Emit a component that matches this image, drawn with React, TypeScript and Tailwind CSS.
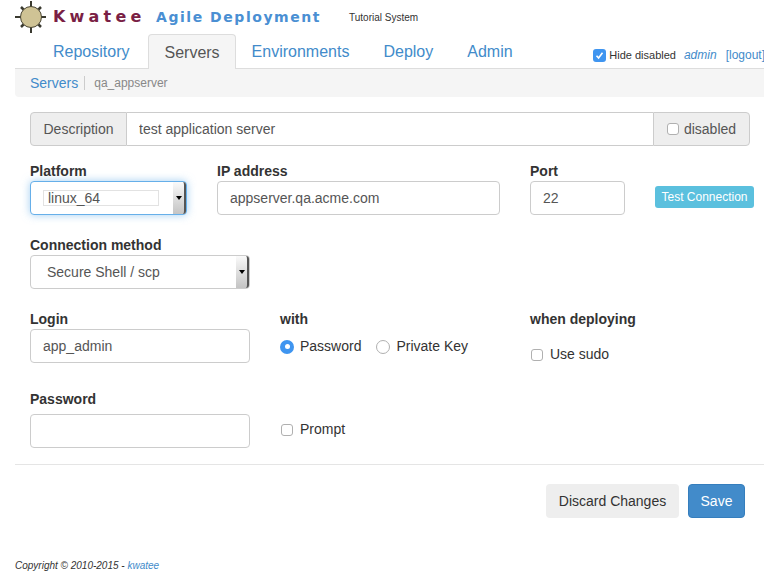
import React from "react";

const tabs = ["Repository", "Servers", "Environments", "Deploy", "Admin"];

// Logo
function SunLogo() {
  return (
    <svg width="32" height="34" viewBox="0 0 32 34" className="shrink-0">
      <g stroke="#3a3a30" strokeWidth="2">
        <path d="M16 1V33" />
        <path d="M0 17H31" />
        <path d="M6 7L10 11M26 7L22 11M6 27L10 23M26 27L22 23" strokeWidth="2.5" />
      </g>
      <circle cx="16" cy="17" r="10.5" fill="#cfc395" stroke="#4a4634" strokeWidth="1" />
    </svg>
  );
}

function Check({ on }: { on?: boolean }) {
  if (on) {
    return (
      <span className="w-[13px] h-[13px] rounded-[3px] bg-[#3f95f0] flex items-center justify-center shrink-0">
        <svg width="9" height="9" viewBox="0 0 9 9">
          <path d="M1.5 4.7L3.6 7L7.5 1.8" fill="none" stroke="#fff" strokeWidth="1.6" />
        </svg>
      </span>
    );
  }
  return <span className="w-[12px] h-[12px] rounded-[3px] bg-white border border-[#b0b0b0] shrink-0" />;
}

function Radio({ on }: { on?: boolean }) {
  if (on) {
    return (
      <span className="w-[14px] h-[14px] rounded-full bg-[#3f95f0] flex items-center justify-center shrink-0">
        <span className="w-[5px] h-[5px] rounded-full bg-white" />
      </span>
    );
  }
  return <span className="w-[14px] h-[14px] rounded-full bg-white border border-[#b0b0b0] shrink-0" />;
}

function Label({ children }: { children: React.ReactNode }) {
  return <div className="text-[14px] leading-[20px] font-bold text-[#333]">{children}</div>;
}

function TextBox({ value, className }: { value: string; className: string }) {
  return (
    <input
      readOnly
      value={value}
      className={`h-[34px] px-3 text-[14px] text-[#555] bg-white border border-[#ccc] rounded-[4px] outline-none ${className}`}
    />
  );
}

function SelectArrow() {
  return (
    <div className="w-[13px] self-stretch bg-gradient-to-b from-[#fafafa] to-[#c4c4c4] border-r-2 border-[#555] rounded-r-[3px] flex items-center justify-center">
      <span className="w-0 h-0 border-x-[3px] border-x-transparent border-t-[4px] border-t-black" />
    </div>
  );
}

export default function App() {
  return (
    <div className="w-[764px] h-[571px] overflow-hidden bg-white font-['Liberation_Sans',Arial,sans-serif] text-[#333] text-[14px]">
      {/* Header */}
      <div className="h-[34px] pl-[15px] flex items-center">
        <SunLogo />
        <span className="ml-[6px] w-[103px] font-['DejaVu_Sans',sans-serif] font-bold text-[16px] tracking-[4.2px] text-[#7a1f45]">Kwatee</span>
        <span className="w-[193px] font-['DejaVu_Sans',sans-serif] text-[14px] font-semibold tracking-[1.55px] text-[#4a8fd3]">Agile Deployment</span>
        <span className="text-[10px] text-[#333]">Tutorial System</span>
      </div>

      {/* Tabs */}
      <div className="h-[35px] ml-[15px] pl-[22px] flex items-end border-b border-[#ddd]">
        {tabs.map((t) =>
          t === "Servers" ? (
            <div key={t} className="h-[35px] -mb-px px-[15px] pt-[2px] flex items-center text-[16px] text-[#555] bg-[#f5f5f5] border border-b-0 border-[#ddd] rounded-t-[4px]">
              {t}
            </div>
          ) : (
            <div key={t} className={`h-[35px] px-[16px] pt-[2px] flex items-center text-[16px] text-[#428bca] ${t === "Repository" ? "mr-[3px]" : "mr-[2px]"}`}>{t}</div>
          )
        )}
        <div className="ml-auto -mr-px h-[35px] flex items-center text-[11px] pt-[9px]">
          <Check on />
          <span className="ml-[3px] text-[#333]">Hide disabled</span>
          <span className="ml-[8px] italic text-[12px] text-[#428bca]">admin</span>
          <span className="ml-[9px] text-[12px] text-[#428bca]">[logout]</span>
        </div>
      </div>

      {/* Breadcrumb */}
      <div className="h-[28px] ml-[15px] pl-[15px] flex items-center bg-[#f5f5f5] rounded-bl-[4px]">
        <span className="text-[#428bca]">Servers</span>
        <span className="ml-[6px] h-[14px] border-l border-[#ccc]" />
        <span className="ml-[9px] text-[12px] text-[#888]">qa_appserver</span>
      </div>

      {/* Form */}
      <div className="px-[30px] pt-[15px] w-[750px] box-content">
        <div className="flex h-[34px] w-[720px]">
          <div className="w-[97px] flex items-center justify-center bg-[#eee] border border-[#ccc] rounded-l-[4px] text-[#555]">Description</div>
          <input readOnly value="test application server" className="flex-1 min-w-0 px-3 text-[14px] text-[#555] border-y border-[#ccc] outline-none" />
          <div className="w-[97px] flex items-center justify-center gap-[5px] bg-[#eee] border border-[#ccc] rounded-r-[4px] text-[#555]">
            <Check />
            disabled
          </div>
        </div>

        <div className="mt-[15px] flex">
          <div className="w-[187px]">
            <Label>Platform</Label>
            <div className="w-[157px] h-[34px] flex items-center pl-[12px] bg-white border border-[#66afe9] rounded-[4px] shadow-[0_0_8px_rgba(102,175,233,0.6)]">
              <span className="w-[116px] h-[16px] px-1 flex items-center border border-[#e2e2e2] text-[#555]">linux_64</span>
              <span className="flex-1" />
              <SelectArrow />
            </div>
          </div>
          <div className="w-[313px]">
            <Label>IP address</Label>
            <TextBox value="appserver.qa.acme.com" className="w-[283px]" />
          </div>
          <div className="w-[125px]">
            <Label>Port</Label>
            <TextBox value="22" className="w-[95px]" />
          </div>
          <div className="pt-[25px]">
            <div className="w-[99px] h-[22px] flex items-center justify-center bg-[#5bc0de] rounded-[3px] text-[12px] text-white">Test Connection</div>
          </div>
        </div>

        <div className="mt-[20px]">
          <Label>Connection method</Label>
          <div className="w-[220px] h-[34px] flex items-center pl-[16px] bg-white border border-[#ccc] rounded-[4px] text-[#555]">
            Secure Shell / scp
            <span className="flex-1" />
            <SelectArrow />
          </div>
        </div>

        <div className="mt-[20px] flex">
          <div className="w-[250px]">
            <Label>Login</Label>
            <TextBox value="app_admin" className="w-[220px]" />
          </div>
          <div className="w-[250px]">
            <Label>with</Label>
            <div className="mt-[7px] flex items-center">
              <Radio on />
              <span className="ml-[6px] mr-[15px]">Password</span>
              <Radio />
              <span className="ml-[6px]">Private Key</span>
            </div>
          </div>
          <div>
            <Label>when deploying</Label>
            <div className="mt-[15px] pl-[1px] flex items-center gap-[7px]">
              <Check />
              Use sudo
            </div>
          </div>
        </div>

        <div className="mt-[24px] flex">
          <div className="w-[250px]">
            <Label>Password</Label>
            <div className="mt-[5px]"><TextBox value="" className="w-[220px] block" /></div>
          </div>
          <div className="pt-[30px] pl-[1px] h-fit flex items-center gap-[7px]">
            <Check />
            Prompt
          </div>
        </div>
      </div>

      <div className="mt-[16px] ml-[15px] border-t border-[#e5e5e5]" />

      {/* Actions */}
      <div className="mt-[19px] pr-[19px] flex justify-end gap-[9px]">
        <div className="w-[133px] h-[34px] flex items-center justify-center bg-[#eee] rounded-[4px]">Discard Changes</div>
        <div className="w-[57px] h-[34px] flex items-center justify-center bg-[#428bca] border border-[#357ebd] rounded-[4px] text-white">Save</div>
      </div>

      {/* Footer */}
      <div className="mt-[42px] pl-[15px] text-[10px] leading-[11px] italic text-[#333]">
        Copyright © 2010-2015 - <span className="text-[#428bca]">kwatee</span>
      </div>
    </div>
  );
}
